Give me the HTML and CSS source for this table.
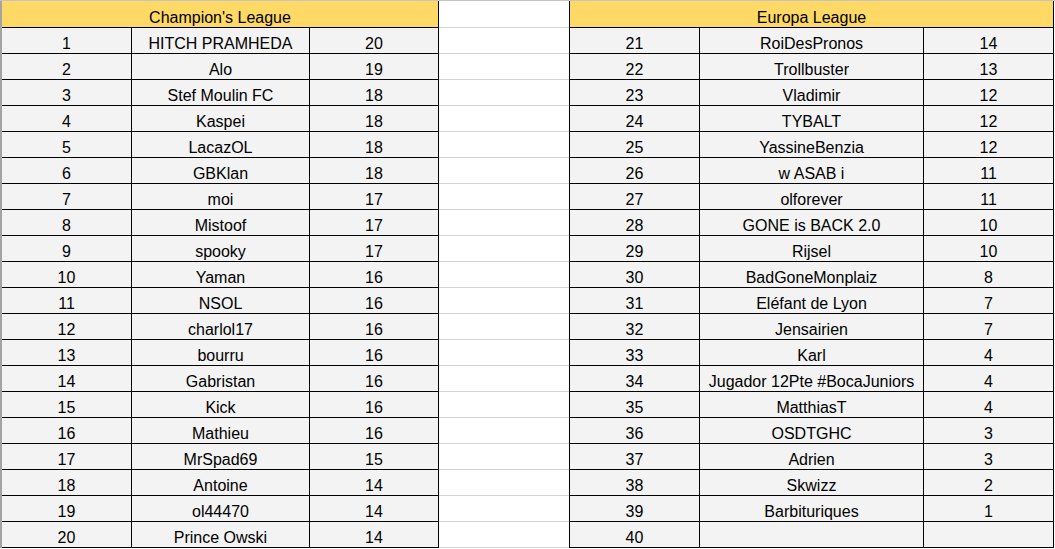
FILE: index.html
```html
<!DOCTYPE html>
<html>
<head>
<meta charset="utf-8">
<link rel="stylesheet" href="styles.css">
</head>
<body>
<div class="sheet">
  <div class="table left">
    <div class="head">Champion's League</div>
    <div class="c c1">1</div><div class="c c2">HITCH PRAMHEDA</div><div class="c c3">20</div>
    <div class="c c1">2</div><div class="c c2">Alo</div><div class="c c3">19</div>
    <div class="c c1">3</div><div class="c c2">Stef Moulin FC</div><div class="c c3">18</div>
    <div class="c c1">4</div><div class="c c2">Kaspei</div><div class="c c3">18</div>
    <div class="c c1">5</div><div class="c c2">LacazOL</div><div class="c c3">18</div>
    <div class="c c1">6</div><div class="c c2">GBKlan</div><div class="c c3">18</div>
    <div class="c c1">7</div><div class="c c2">moi</div><div class="c c3">17</div>
    <div class="c c1">8</div><div class="c c2">Mistoof</div><div class="c c3">17</div>
    <div class="c c1">9</div><div class="c c2">spooky</div><div class="c c3">17</div>
    <div class="c c1">10</div><div class="c c2">Yaman</div><div class="c c3">16</div>
    <div class="c c1">11</div><div class="c c2">NSOL</div><div class="c c3">16</div>
    <div class="c c1">12</div><div class="c c2">charlol17</div><div class="c c3">16</div>
    <div class="c c1">13</div><div class="c c2">bourru</div><div class="c c3">16</div>
    <div class="c c1">14</div><div class="c c2">Gabristan</div><div class="c c3">16</div>
    <div class="c c1">15</div><div class="c c2">Kick</div><div class="c c3">16</div>
    <div class="c c1">16</div><div class="c c2">Mathieu</div><div class="c c3">16</div>
    <div class="c c1">17</div><div class="c c2">MrSpad69</div><div class="c c3">15</div>
    <div class="c c1">18</div><div class="c c2">Antoine</div><div class="c c3">14</div>
    <div class="c c1">19</div><div class="c c2">ol44470</div><div class="c c3">14</div>
    <div class="c c1">20</div><div class="c c2">Prince Owski</div><div class="c c3">14</div>
  </div>
  <div class="gap">
    <div class="g gh"></div>
    <div class="g"></div><div class="g"></div><div class="g"></div><div class="g"></div><div class="g"></div>
    <div class="g"></div><div class="g"></div><div class="g"></div><div class="g"></div><div class="g"></div>
    <div class="g"></div><div class="g"></div><div class="g"></div><div class="g"></div><div class="g"></div>
    <div class="g"></div><div class="g"></div><div class="g"></div><div class="g"></div><div class="g"></div>
  </div>
  <div class="table right">
    <div class="head">Europa League</div>
    <div class="c c1">21</div><div class="c c2">RoiDesPronos</div><div class="c c3">14</div>
    <div class="c c1">22</div><div class="c c2">Trollbuster</div><div class="c c3">13</div>
    <div class="c c1">23</div><div class="c c2">Vladimir</div><div class="c c3">12</div>
    <div class="c c1">24</div><div class="c c2">TYBALT</div><div class="c c3">12</div>
    <div class="c c1">25</div><div class="c c2">YassineBenzia</div><div class="c c3">12</div>
    <div class="c c1">26</div><div class="c c2">w ASAB i</div><div class="c c3">11</div>
    <div class="c c1">27</div><div class="c c2">olforever</div><div class="c c3">11</div>
    <div class="c c1">28</div><div class="c c2">GONE is BACK 2.0</div><div class="c c3">10</div>
    <div class="c c1">29</div><div class="c c2">Rijsel</div><div class="c c3">10</div>
    <div class="c c1">30</div><div class="c c2">BadGoneMonplaiz</div><div class="c c3">8</div>
    <div class="c c1">31</div><div class="c c2">Eléfant de Lyon</div><div class="c c3">7</div>
    <div class="c c1">32</div><div class="c c2">Jensairien</div><div class="c c3">7</div>
    <div class="c c1">33</div><div class="c c2">Karl</div><div class="c c3">4</div>
    <div class="c c1">34</div><div class="c c2">Jugador 12Pte #BocaJuniors</div><div class="c c3">4</div>
    <div class="c c1">35</div><div class="c c2">MatthiasT</div><div class="c c3">4</div>
    <div class="c c1">36</div><div class="c c2">OSDTGHC</div><div class="c c3">3</div>
    <div class="c c1">37</div><div class="c c2">Adrien</div><div class="c c3">3</div>
    <div class="c c1">38</div><div class="c c2">Skwizz</div><div class="c c3">2</div>
    <div class="c c1">39</div><div class="c c2">Barbituriques</div><div class="c c3">1</div>
    <div class="c c1">40</div><div class="c c2"></div><div class="c c3"></div>
  </div>
</div>
</body>
</html>
```

FILE: styles.css
```css
* { box-sizing: border-box; }
html, body { margin: 0; padding: 0; background: #ffffff; }
body {
  font-family: "Liberation Sans", Arial, sans-serif;
  font-size: 16px;
  color: #000000;
  width: 1055px;
  height: 549px;
  overflow: hidden;
}
.sheet {
  display: flex;
  align-items: flex-start;
  border-top: 1px solid #c4c4c4;
}
.table {
  display: grid;
  grid-auto-rows: 26px;
  grid-template-rows: 27px;
}
.left {
  border-left: 2px solid #a3a3a3;
  grid-template-columns: 130px 178px 129px;
}
.right {
  border-left: 1px solid #000000;
  grid-template-columns: 130px 224px 130px;
}
.head {
  grid-column: 1 / -1;
  grid-row: 1;
  height: 27px;
  background: #ffd966;
  border-right: 1px solid #000000;
  border-bottom: 1px solid #000000;
  text-align: center;
  line-height: 19px;
  padding-top: 7px;
  white-space: nowrap;
}
.c {
  height: 26px;
  background: #f3f3f3;
  border-right: 1px solid #000000;
  border-bottom: 1px solid #000000;
  text-align: center;
  line-height: 19px;
  padding-top: 6px;
  white-space: nowrap;
  overflow: hidden;
}
.gap {
  width: 130px;
  display: flex;
  flex-direction: column;
}
.g {
  height: 26px;
  border-bottom: 1px solid #d4d4d4;
}
.g.gh { height: 27px; }
```
